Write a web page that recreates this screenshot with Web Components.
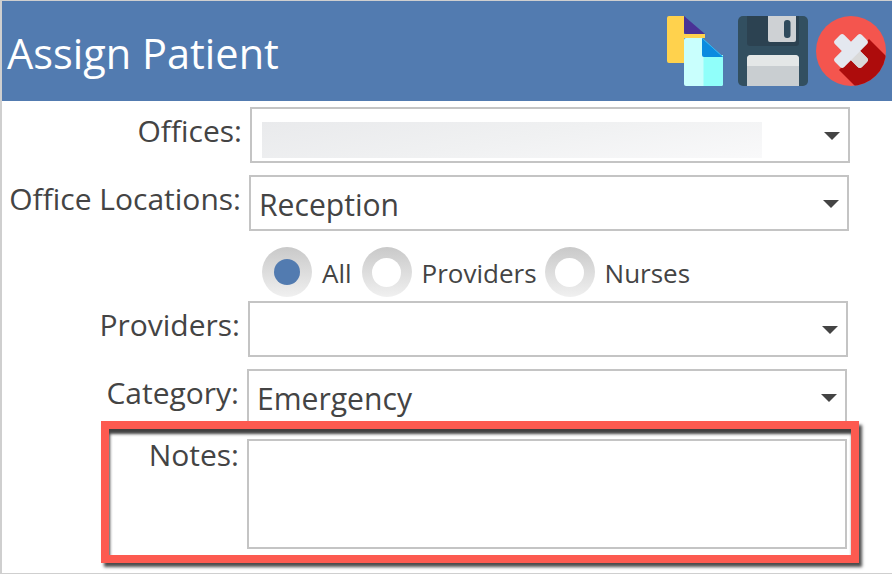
<!DOCTYPE html>
<html lang="en">
<head>
<meta charset="utf-8">
<title>Assign Patient</title>
<style>
  html, body { margin: 0; padding: 0; background: #fff; }
  body { width: 892px; height: 574px; overflow: hidden; font-family: "Open Sans", "Liberation Sans", sans-serif; color: #444; }
</style>
</head>
<body>
<assign-dialog>
  <dialog-header title="Assign Patient"></dialog-header>
  <form-row label="Offices:" x="10" style="margin-top:6px"><select-box blurred></select-box></form-row>
  <form-row label="Office Locations:" x="9" style="margin-top:12px"><select-box value="Reception"></select-box></form-row>
  <radio-group style="margin-top:16px">
    <radio-option checked style="margin-right:2px">All</radio-option>
    <radio-option>Providers</radio-option>
    <radio-option>Nurses</radio-option>
  </radio-group>
  <form-row label="Providers:" x="8" style="margin-top:4px"><select-box></select-box></form-row>
  <form-row label="Category:" x="7" style="margin-top:12px"><select-box value="Emergency"></select-box></form-row>
  <form-row label="Notes:" x="7" compact style="margin-top:14px"><notes-box></notes-box></form-row>
  <red-callout></red-callout>
</assign-dialog>

<script>
class AssignDialog extends HTMLElement {
  constructor() {
    super();
    this.attachShadow({ mode: "open" });
    this.shadowRoot.innerHTML = `
      <style>
        :host {
          display: block;
          position: relative;
          box-sizing: border-box;
          width: 892px;
          height: 574px;
          padding: 1px 0 0 2px;
          box-shadow: inset 2px 1px 0 #cfcfcf, inset 0 -1px 0 #cfcfcf;
        }
      </style>
      <slot></slot>
    `;
  }
}
customElements.define("assign-dialog", AssignDialog);

class DialogHeader extends HTMLElement {
  constructor() {
    super();
    this.attachShadow({ mode: "open" });
    this.shadowRoot.innerHTML = `
      <style>
        :host {
          display: flex;
          align-items: center;
          height: 100px;
          background: #527bb0;
          color: #fff;
          padding-left: 5px;
        }
        h1 {
          margin: 0;
          flex: 1;
          font: 400 41.5px "Open Sans", "Liberation Sans", sans-serif;
          position: relative;
          top: 2px;
        }
        .icons { display: flex; gap: 15px; align-items: center; padding-right: 6px; }
        svg { display: block; }
        .close { margin-left: -7px; }
      </style>
      <h1>${this.getAttribute("title")}</h1>
      <div class="icons">
        <svg width="56" height="70" viewBox="0 0 56 70">
          <path d="M2 0H17V18H38V22H17V47H2a2 2 0 0 1-2-2V2a2 2 0 0 1 2-2z" fill="#ffd24d"/>
          <path d="M17 0L38 18H19a2 2 0 0 1-2-2z" fill="#4a3296"/>
          <path d="M19 22H35L56 41V68a2 2 0 0 1-2 2H19a2 2 0 0 1-2-2V24a2 2 0 0 1 2-2z" fill="#c9fffd"/>
          <path d="M36.500 39H56V68a2 2 0 0 1-2 2H36.500z" fill="#90fffa"/>
          <path d="M35 22L56 41H37a2 2 0 0 1-2-2z" fill="#0a8be0"/>
          <path d="M35 22L56 41" stroke="#2fb4ee" fill="none"/>
        </svg>
        <svg width="70" height="70" viewBox="0 0 70 70">
          <rect width="70" height="70" rx="5" fill="#324f60"/>
          <path d="M9 0H61V27a3 3 0 0 1-3 3H12a3 3 0 0 1-3-3z" fill="#2c4251"/>
          <path d="M30 0H58V24a2 2 0 0 1-2 2H32a2 2 0 0 1-2-2z" fill="#ced1d4"/>
          <rect x="46" y="4" width="6.5" height="18" rx="3" fill="#2f4a5c"/>
          <path d="M9 70V43a4 4 0 0 1 4-4H57a4 4 0 0 1 4 4V70z" fill="#c9ced1"/>
          <path d="M9 50V43a4 4 0 0 1 4-4H57a4 4 0 0 1 4 4V50z" fill="#e4e7e7"/>
        </svg>
        <svg class="close" width="70" height="70" viewBox="0 0 70 70">
          <defs><clipPath id="disc"><circle cx="35" cy="35" r="35"/></clipPath></defs>
          <circle cx="35" cy="35" r="35" fill="#f4554e"/>
          <path d="M53 23L90 60L60 91L23 54z" fill="#ad0c0c" clip-path="url(#disc)"/>
          <g transform="rotate(45 35 35)">
            <rect x="28.500" y="16" width="13" height="38" rx="3" fill="#e4e8ef"/>
            <rect x="16" y="28.500" width="38" height="13" rx="3" fill="#e4e8ef"/>
            <path d="M41.500 28.500H51a3 3 0 0 1 3 3V38.500a3 3 0 0 1-3 3H41.500z" fill="#d9d9d9"/>
          </g>
        </svg>
      </div>
    `;
  }
}
customElements.define("dialog-header", DialogHeader);

class FormRow extends HTMLElement {
  constructor() {
    super();
    this.attachShadow({ mode: "open" });
    const x = this.getAttribute("x");
    const lineHeight = this.hasAttribute("compact") ? 32 : 47;
    this.shadowRoot.innerHTML = `
      <style>
        :host {
          display: grid;
          grid-template-columns: 230px 600px;
          column-gap: 8px;
          padding-left: ${x}px;
        }
        label {
          display: flex;
          justify-content: flex-end;
          font: 400 30px/${lineHeight}px "Open Sans", "Liberation Sans", sans-serif;
          height: ${lineHeight}px;
          color: #444;
          white-space: nowrap;
        }
      </style>
      <label>${this.getAttribute("label")}</label>
      <slot></slot>
    `;
  }
}
customElements.define("form-row", FormRow);

class SelectBox extends HTMLElement {
  constructor() {
    super();
    this.attachShadow({ mode: "open" });
    const value = this.getAttribute("value") || "";
    const blurred = this.hasAttribute("blurred");
    this.shadowRoot.innerHTML = `
      <style>
        :host {
          display: flex;
          align-items: center;
          box-sizing: border-box;
          width: 600px;
          height: 56px;
          border: 2px solid #c4c4c4;
          padding: 0 8px 0 8px;
          background: #fff;
        }
        .value {
          flex: 1;
          font: 400 30.1px/52px "Open Sans", "Liberation Sans", sans-serif;
          color: #444;
          white-space: nowrap;
          position: relative;
          top: 2px;
        }
        .blur {
          width: 500px;
          height: 36px;
          margin: 10px 0 0 2px;
          background: linear-gradient(170deg, #e9eaec, #f0f1f2 50%, #f9f9fa);
        }
        .spacer { flex: 1; }
        .arrow {
          width: 0;
          height: 0;
          border-left: 8px solid transparent;
          border-right: 8px solid transparent;
          border-top: 8px solid #444;
          margin-top: 2px;
        }
      </style>
      ${blurred ? '<div class="blur"></div><div class="spacer"></div>' : `<div class="value">${value}</div>`}
      <div class="arrow"></div>
    `;
  }
}
customElements.define("select-box", SelectBox);

class RadioGroup extends HTMLElement {
  constructor() {
    super();
    this.attachShadow({ mode: "open" });
    this.shadowRoot.innerHTML = `
      <style>
        :host {
          display: flex;
          align-items: center;
          gap: 8px;
          height: 50px;
          padding-left: 260px;
        }
      </style>
      <slot></slot>
    `;
  }
}
customElements.define("radio-group", RadioGroup);

class RadioOption extends HTMLElement {
  constructor() {
    super();
    this.attachShadow({ mode: "open" });
    const checked = this.hasAttribute("checked");
    this.shadowRoot.innerHTML = `
      <style>
        :host {
          display: flex;
          align-items: center;
          gap: 10px;
          font: 400 26px "Open Sans", "Liberation Sans", sans-serif;
          color: #444;
        }
        span { position: relative; top: 1px; }
        .ring {
          display: flex;
          align-items: center;
          justify-content: center;
          width: 50px;
          height: 50px;
          border-radius: 50%;
          background: linear-gradient(#c9c9c9, #f0f0f0);
        }
        .dot {
          width: ${checked ? 26 : 29}px;
          height: ${checked ? 26 : 29}px;
          border-radius: 50%;
          background: ${checked ? "#527bb0" : "#fff"};
        }
      </style>
      <div class="ring"><div class="dot"></div></div>
      <span><slot></slot></span>
    `;
  }
}
customElements.define("radio-option", RadioOption);

class NotesBox extends HTMLElement {
  constructor() {
    super();
    this.attachShadow({ mode: "open" });
    this.shadowRoot.innerHTML = `
      <style>
        :host {
          display: block;
          box-sizing: border-box;
          width: 600px;
          height: 110px;
          border: 2px solid #c4c4c4;
          background: #fff;
        }
      </style>
    `;
  }
}
customElements.define("notes-box", NotesBox);

// annotation drawn over the form
class RedCallout extends HTMLElement {
  constructor() {
    super();
    this.attachShadow({ mode: "open" });
    this.shadowRoot.innerHTML = `
      <style>
        :host {
          position: absolute;
          left: 101px;
          top: 421px;
          box-sizing: border-box;
          width: 758px;
          height: 142px;
          border: 8px solid #fd5a50;
          box-shadow: 3px 4px 3px rgba(0,0,0,.7), inset 1px 5px 3px rgba(0,0,0,.75);
          pointer-events: none;
        }
      </style>
    `;
  }
}
customElements.define("red-callout", RedCallout);
</script>
</body>
</html>
